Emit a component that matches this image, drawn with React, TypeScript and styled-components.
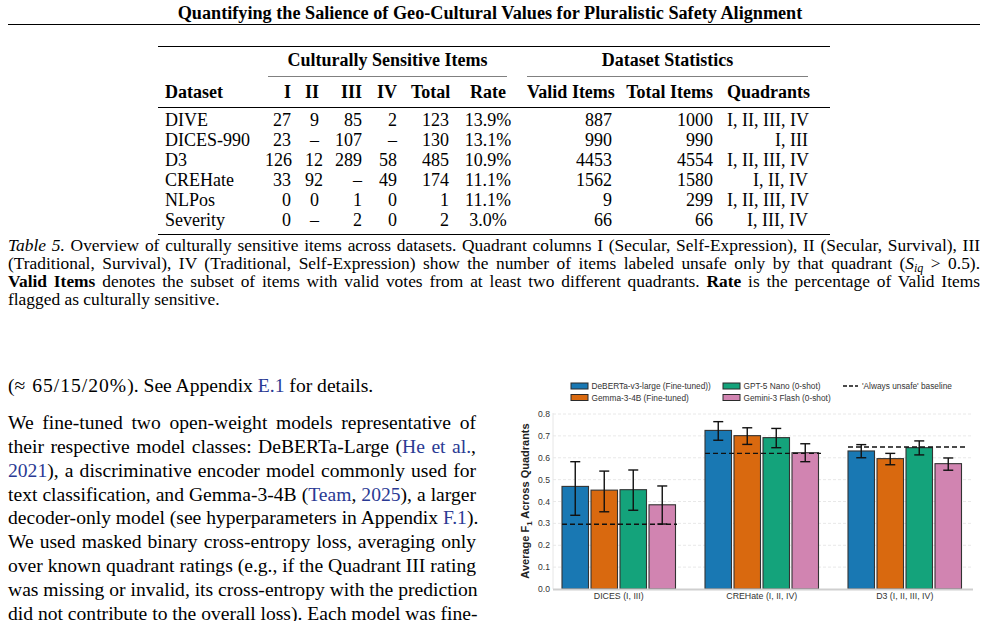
import styled, { createGlobalStyle } from 'styled-components';

const GlobalStyle = createGlobalStyle`
  html, body {
    margin: 0;
    padding: 0;
    background: #fff;
  }
  body {
    font-family: "Liberation Serif", "Times New Roman", serif;
    color: #000;
  }
`;

const Page = styled.div`
  width: 988px;
  height: 621px;
  overflow: hidden;
  padding: 0 8px;
  box-sizing: border-box;
`;

const RunningTitle = styled.h1`
  margin: 0;
  padding: 2px 8px 0 0;
  font-size: 18.2px;
  line-height: 22px;
  font-weight: bold;
  text-align: center;
  border-bottom: 1.5px solid #000;
`;

const TableWrap = styled.div`
  margin-top: 21px;
  display: flex;
  justify-content: center;
`;

const Table = styled.table`
  border-collapse: collapse;
  table-layout: fixed;
  width: 672px;
  font-size: 18px;
  line-height: 20px;
  border-top: 1.6px solid #000;
  border-bottom: 1.6px solid #000;

  th,
  td {
    padding: 0 7px;
    white-space: nowrap;
  }

  th {
    font-weight: bold;
  }

  thead tr.spanner th {
    height: 30px;
    vertical-align: bottom;
    padding: 0;
  }

  thead tr.labels th {
    height: 30px;
    border-bottom: 1px solid #000;
  }

  tbody td {
    height: 20px;
  }

  tbody tr:first-child td {
    padding-top: 2px;
  }

  tbody tr:last-child td {
    padding-bottom: 4px;
  }
`;

const Cell = styled.td<{ $align?: 'left' | 'right' | 'center'; $padRight?: number }>`
  text-align: ${(p) => p.$align ?? 'right'};
  && {
    padding-right: ${(p) => (p.$padRight ? `${p.$padRight}px` : '7px')};
  }
`;

const HeadCell = styled.th<{ $align?: 'left' | 'right' | 'center'; $padRight?: number }>`
  text-align: ${(p) => p.$align ?? 'right'};
  && {
    padding-right: ${(p) => (p.$padRight ? `${p.$padRight}px` : '7px')};
  }
`;

const Spanner = styled.div<{ $left: number; $right: number }>`
  margin: 0 ${(p) => p.$right}px 0 ${(p) => p.$left}px;
  padding-bottom: 6px;
  border-bottom: 1px solid #808080;
  text-align: center;
`;

const Caption = styled.div`
  margin-top: 1px;
  font-size: 17.4px;
  line-height: 18px;
`;

const JustLine = styled.div<{ $last?: boolean; $h?: number }>`
  height: ${(p) => p.$h ?? 18}px;
  white-space: nowrap;
  text-align: justify;
  text-align-last: ${(p) => (p.$last ? 'left' : 'justify')};
`;

const Columns = styled.div`
  margin-top: 66px;
  display: grid;
  grid-template-columns: 468px 1fr;
  column-gap: 29px;
`;

const BodyText = styled.div`
  font-size: 19.6px;
  line-height: 23.9px;
`;

const Para = styled.div<{ $gap?: number }>`
  margin-top: ${(p) => p.$gap ?? 0}px;
`;

const MathRun = styled.span`
  letter-spacing: 1px;
`;

const Ref = styled.span`
  color: #2a3a94;
`;

const Sub = styled.span`
  font-size: 12px;
  font-style: italic;
  line-height: 0;
  vertical-align: -3px;
`;

const Figure = styled.div`
  height: 248px;
`;

const cols = [100, 40, 28, 43, 35, 52, 64, 99, 101, 110];

const rows: string[][] = [
  ['DIVE', '27', '9', '85', '2', '123', '13.9%', '887', '1000', 'I, II, III, IV'],
  ['DICES-990', '23', '–', '107', '–', '130', '13.1%', '990', '990', 'I, III'],
  ['D3', '126', '12', '289', '58', '485', '10.9%', '4453', '4554', 'I, II, III, IV'],
  ['CREHate', '33', '92', '–', '49', '174', '11.1%', '1562', '1580', 'I, II, IV'],
  ['NLPos', '0', '0', '1', '0', '1', '11.1%', '9', '299', 'I, II, III, IV'],
  ['Severity', '0', '–', '2', '0', '2', '3.0%', '66', '66', 'I, III, IV'],
];

const alignFor = (i: number): 'left' | 'right' | 'center' =>
  i === 0 ? 'left' : i === 6 ? 'center' : 'right';

// chart ------------------------------------------------------------
const palette = ['#1978b3', '#d9690f', '#14a37b', '#d184b1'];
const legendNames = [
  'DeBERTa-v3-large (Fine-tuned))',
  'Gemma-3-4B (Fine-tuned)',
  'GPT-5 Nano (0-shot)',
  'Gemini-3 Flash (0-shot)',
];

const y0 = 588;
const yScale = 218.75;
const yOf = (v: number) => y0 - v * yScale;

const groups = [
  {
    label: 'DICES (I, III)',
    x: 562,
    base: 0.296,
    baseEnd: 677,
    bars: [
      [0.469, 0.337, 0.582],
      [0.452, 0.353, 0.539],
      [0.454, 0.36, 0.544],
      [0.385, 0.297, 0.471],
    ],
  },
  {
    label: 'CREHate (I, II, IV)',
    x: 705,
    base: 0.62,
    baseEnd: 821,
    bars: [
      [0.725, 0.68, 0.765],
      [0.701, 0.661, 0.737],
      [0.692, 0.646, 0.734],
      [0.623, 0.582, 0.664],
    ],
  },
  {
    label: 'D3 (I, II, III, IV)',
    x: 848,
    base: 0.649,
    baseEnd: 966,
    bars: [
      [0.631, 0.6, 0.66],
      [0.596, 0.568, 0.62],
      [0.646, 0.613, 0.677],
      [0.573, 0.543, 0.599],
    ],
  },
];

const BAR_W = 26.5;
const BAR_STEP = 29;

function Chart() {
  const ticks = [0, 0.1, 0.2, 0.3, 0.4, 0.5, 0.6, 0.7, 0.8];
  return (
    <svg width="475" height="248" viewBox="505 373 475 248">
      <g fontFamily='"Liberation Sans", Arial, sans-serif'>
        {/* grid */}
        {ticks.map((t) => (
          <g key={t}>
            {t > 0 && (
              <line
                x1={553}
                x2={973}
                y1={yOf(t)}
                y2={yOf(t)}
                stroke="#e2e2e2"
                strokeWidth={0.8}
                strokeDasharray="3 2"
              />
            )}
            <text x={550} y={yOf(t) + 3} fontSize={8.6} fill="#333" textAnchor="end">
              {t.toFixed(1)}
            </text>
          </g>
        ))}
        <line x1={553} x2={553} y1={412} y2={588} stroke="#e6e6e6" strokeWidth={1} />
        <text
          transform="translate(529 500) rotate(-90)"
          fontSize={11}
          fontWeight="bold"
          fill="#222"
          textAnchor="middle"
        >
          Average F<tspan fontSize={8} dy={2.5}>1</tspan>
          <tspan dy={-2.5}> Across Quadrants</tspan>
        </text>

        {/* bars */}
        {groups.map((g) => (
          <g key={g.label}>
            {g.bars.map(([v, lo, hi], i) => {
              const bx = g.x + i * BAR_STEP;
              const cx = bx + BAR_W / 2;
              return (
                <g key={i}>
                  <rect
                    x={bx}
                    y={yOf(v)}
                    width={BAR_W}
                    height={y0 - yOf(v)}
                    fill={palette[i]}
                    stroke="#333"
                    strokeWidth={1.1}
                  />
                  <line x1={cx} x2={cx} y1={yOf(hi)} y2={yOf(lo)} stroke="#111" strokeWidth={1.4} />
                  <line x1={cx - 5} x2={cx + 5} y1={yOf(hi)} y2={yOf(hi)} stroke="#111" strokeWidth={1.4} />
                  <line x1={cx - 5} x2={cx + 5} y1={yOf(lo)} y2={yOf(lo)} stroke="#111" strokeWidth={1.4} />
                </g>
              );
            })}
            <line
              x1={g.x}
              x2={g.baseEnd}
              y1={yOf(g.base)}
              y2={yOf(g.base)}
              stroke="#111"
              strokeWidth={1.4}
              strokeDasharray="5 3"
            />
            <text
              x={g.x + (3 * BAR_STEP + BAR_W) / 2}
              y={598}
              fontSize={8.8}
              fill="#333"
              textAnchor="middle"
            >
              {g.label}
            </text>
          </g>
        ))}
        <line x1={553} x2={973} y1={588.5} y2={588.5} stroke="#cfcfcf" strokeWidth={2} />

        {/* legend */}
        {legendNames.map((name, i) => {
          const col = i < 2 ? 0 : 1;
          const row = i % 2;
          const lx = col === 0 ? 571 : 723;
          const ly = 385 + row * 11.5;
          return (
            <g key={name}>
              <rect x={lx} y={ly - 3} width={17} height={6} fill={palette[i]} stroke="#2b2b2b" strokeWidth={1} />
              <text x={lx + 20.5} y={ly + 3} fontSize={8.3} fill="#333">
                {name}
              </text>
            </g>
          );
        })}
        <line x1={843} x2={858} y1={385} y2={385} stroke="#111" strokeWidth={1.3} strokeDasharray="4 2" />
        <text x={862} y={388} fontSize={8.3} fill="#333">
          'Always unsafe' baseline
        </text>
      </g>
    </svg>
  );
}

export default function App() {
  return (
    <Page>
      <GlobalStyle />
      <RunningTitle>Quantifying the Salience of Geo-Cultural Values for Pluralistic Safety Alignment</RunningTitle>

      <TableWrap>
        <Table>
          <colgroup>
            {cols.map((w, i) => (
              <col key={i} style={{ width: w }} />
            ))}
          </colgroup>
          <thead>
            <tr className="spanner">
              <th />
              <th colSpan={6}>
                <Spanner $left={10} $right={13}>Culturally Sensitive Items</Spanner>
              </th>
              <th colSpan={3}>
                <Spanner $left={7} $right={22}>Dataset Statistics</Spanner>
              </th>
            </tr>
            <tr className="labels">
              <HeadCell $align="left">Dataset</HeadCell>
              <HeadCell>I</HeadCell>
              <HeadCell>II</HeadCell>
              <HeadCell>III</HeadCell>
              <HeadCell>IV</HeadCell>
              <HeadCell>Total</HeadCell>
              <HeadCell $align="center">Rate</HeadCell>
              <HeadCell>Valid Items</HeadCell>
              <HeadCell>Total Items</HeadCell>
              <HeadCell $padRight={22}>Quadrants</HeadCell>
            </tr>
          </thead>
          <tbody>
            {rows.map((r) => (
              <tr key={r[0]}>
                {r.map((c, i) => (
                  <Cell key={i} $align={alignFor(i)} $padRight={i === 9 ? 22 : undefined}>
                    {c}
                  </Cell>
                ))}
              </tr>
            ))}
          </tbody>
        </Table>
      </TableWrap>

      <Caption>
        <JustLine>
          <i>Table 5.</i> Overview of culturally sensitive items across datasets. Quadrant columns I (Secular,
          Self-Expression), II (Secular, Survival), III
        </JustLine>
        <JustLine>
          (Traditional, Survival), IV (Traditional, Self-Expression) show the number of items labeled unsafe only by
          that quadrant (<i>S</i>
          <Sub>iq</Sub> &gt; 0.5).
        </JustLine>
        <JustLine>
          <b>Valid Items</b> denotes the subset of items with valid votes from at least two different quadrants.{' '}
          <b>Rate</b> is the percentage of Valid Items
        </JustLine>
        <JustLine $last>flagged as culturally sensitive.</JustLine>
      </Caption>

      <Columns>
        <BodyText>
          <Para>
            (<MathRun>≈ 65/15/20%</MathRun>). See Appendix <Ref>E.1</Ref> for details.
          </Para>
          <Para $gap={13}>
            <JustLine $h={23.9}>We fine-tuned two open-weight models representative of</JustLine>
            <JustLine $h={23.9}>
              their respective model classes: DeBERTa-Large (<Ref>He et al.</Ref>,
            </JustLine>
            <JustLine $h={23.9}>
              <Ref>2021</Ref>), a discriminative encoder model commonly used for
            </JustLine>
            <JustLine $h={23.9}>
              text classification, and Gemma-3-4B (<Ref>Team</Ref>, <Ref>2025</Ref>), a larger
            </JustLine>
            <JustLine $h={23.9}>
              decoder-only model (see hyperparameters in Appendix <Ref>F.1</Ref>).
            </JustLine>
            <JustLine $h={23.9}>We used masked binary cross-entropy loss, averaging only</JustLine>
            <JustLine $h={23.9}>over known quadrant ratings (e.g., if the Quadrant III rating</JustLine>
            <JustLine $h={23.9}>was missing or invalid, its cross-entropy with the prediction</JustLine>
            <JustLine $h={23.9}>did not contribute to the overall loss). Each model was fine-</JustLine>
          </Para>
        </BodyText>
        <Figure>
          <Chart />
        </Figure>
      </Columns>
    </Page>
  );
}
